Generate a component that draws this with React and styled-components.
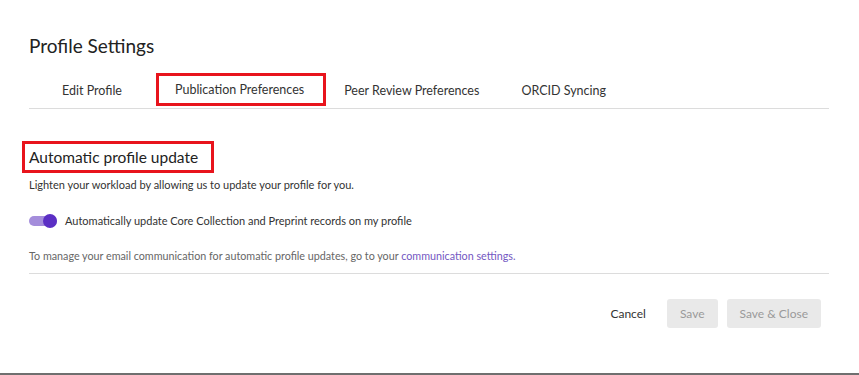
import React from 'react';
import styled, { createGlobalStyle } from 'styled-components';

const GlobalStyle = createGlobalStyle`
  body {
    margin: 0;
    background: #fff;
    font-family: Lato, "Open Sans", "Liberation Sans", sans-serif;
    color: #333;
  }
`;

const App = () => {
  return (
    <>
      <GlobalStyle />
      <Screen>
        <Panel>
          <Title>Profile Settings</Title>
          <TabList>
            <Tab $left={33}>Edit Profile</Tab>
            <Marked $left={34} $pad="0 19px 0 16px">
              <Tab>Publication Preferences</Tab>
            </Marked>
            <Tab $left={18}>Peer Review Preferences</Tab>
            <Tab $left={42}>ORCID Syncing</Tab>
          </TabList>

          <HeadingBox>
            <Heading>Automatic profile update</Heading>
          </HeadingBox>
          <Lead>Lighten your workload by allowing us to update your profile for you.</Lead>

          <ToggleRow>
            <Track>
              <Knob />
            </Track>
            <ToggleLabel>Automatically update Core Collection and Preprint records on my profile</ToggleLabel>
          </ToggleRow>

          <Note>
            To manage your email communication for automatic profile updates, go to your{' '}
            <Link href="#">communication settings.</Link>
          </Note>

          <Divider />

          <Footer>
            <TextButton>Cancel</TextButton>
            <Button>Save</Button>
            <Button>Save &amp; Close</Button>
          </Footer>
        </Panel>
      </Screen>
    </>
  );
};

export default App;

const Screen = styled.div`
  height: 375px;
  box-sizing: border-box;
  border-bottom: 2px solid #6f6f6f;
`
const Panel = styled.div`
  padding: 0 30px 0 29px;
  display: flex;
  flex-direction: column;
`
const Title = styled.h1`
  margin: 34px 0 0;
  font-size: 19px;
  line-height: 24px;
  font-weight: 400;
  color: #222;
`
const TabList = styled.div`
  margin-top: 15px;
  height: 35px;
  display: flex;
  align-items: center;
  border-bottom: 1px solid #dcdcdc;
`
const Tab = styled.div`
  margin-left: ${p => p.$left || 0}px;
  font-size: 12.5px;
  line-height: 16px;
  color: #333;
  white-space: nowrap;
`
const Marked = styled.div`
  margin-left: ${p => p.$left}px;
  padding: ${p => p.$pad};
  height: 33px;
  box-sizing: border-box;
  align-self: flex-start;
  display: flex;
  align-items: center;
  border: 3px solid #e8141c;
`
const HeadingBox = styled.div`
  align-self: flex-start;
  margin: 32px 0 0 -7px;
  padding: 3px 13px 3px 4px;
  border: 3px solid #e8141c;
`
const Heading = styled.h2`
  margin: 0;
  font-size: 15.5px;
  line-height: 20px;
  font-weight: 400;
  color: #222;
`
const Lead = styled.p`
  margin: 5px 0 0;
  font-size: 11px;
  line-height: 14px;
  color: #333;
`
const ToggleRow = styled.div`
  margin-top: 22px;
  display: flex;
  align-items: center;
  gap: 8px;
  height: 14px;
`
const Track = styled.div`
  position: relative;
  width: 28px;
  height: 10px;
  border-radius: 5px;
  background: #a48ddb;
`
const Knob = styled.span`
  position: absolute;
  right: 0;
  top: -2px;
  width: 14px;
  height: 14px;
  border-radius: 50%;
  background: #5b2fc4;
`
const ToggleLabel = styled.span`
  font-size: 11px;
  line-height: 14px;
  color: #333;
`
const Note = styled.p`
  margin: 21px 0 0;
  font-size: 10.75px;
  line-height: 14px;
  color: #666;
`
const Link = styled.a`
  color: #7357c2;
  text-decoration: none;
`
const Divider = styled.hr`
  margin: 10px 0 0;
  border: 0;
  border-top: 1px solid #dcdcdc;
`
const Footer = styled.div`
  margin-top: 25px;
  padding-right: 8px;
  display: flex;
  justify-content: flex-end;
  gap: 9px;
`
const TextButton = styled.button`
  height: 29px;
  padding: 0 12px;
  border: 0;
  background: none;
  font-family: inherit;
  font-size: 12px;
  color: #333;
`
const Button = styled.button`
  height: 29px;
  padding: 0 13px;
  border: 0;
  border-radius: 3px;
  background: #e9e9e9;
  font-family: inherit;
  font-size: 12px;
  color: #9a9a9a;
`
